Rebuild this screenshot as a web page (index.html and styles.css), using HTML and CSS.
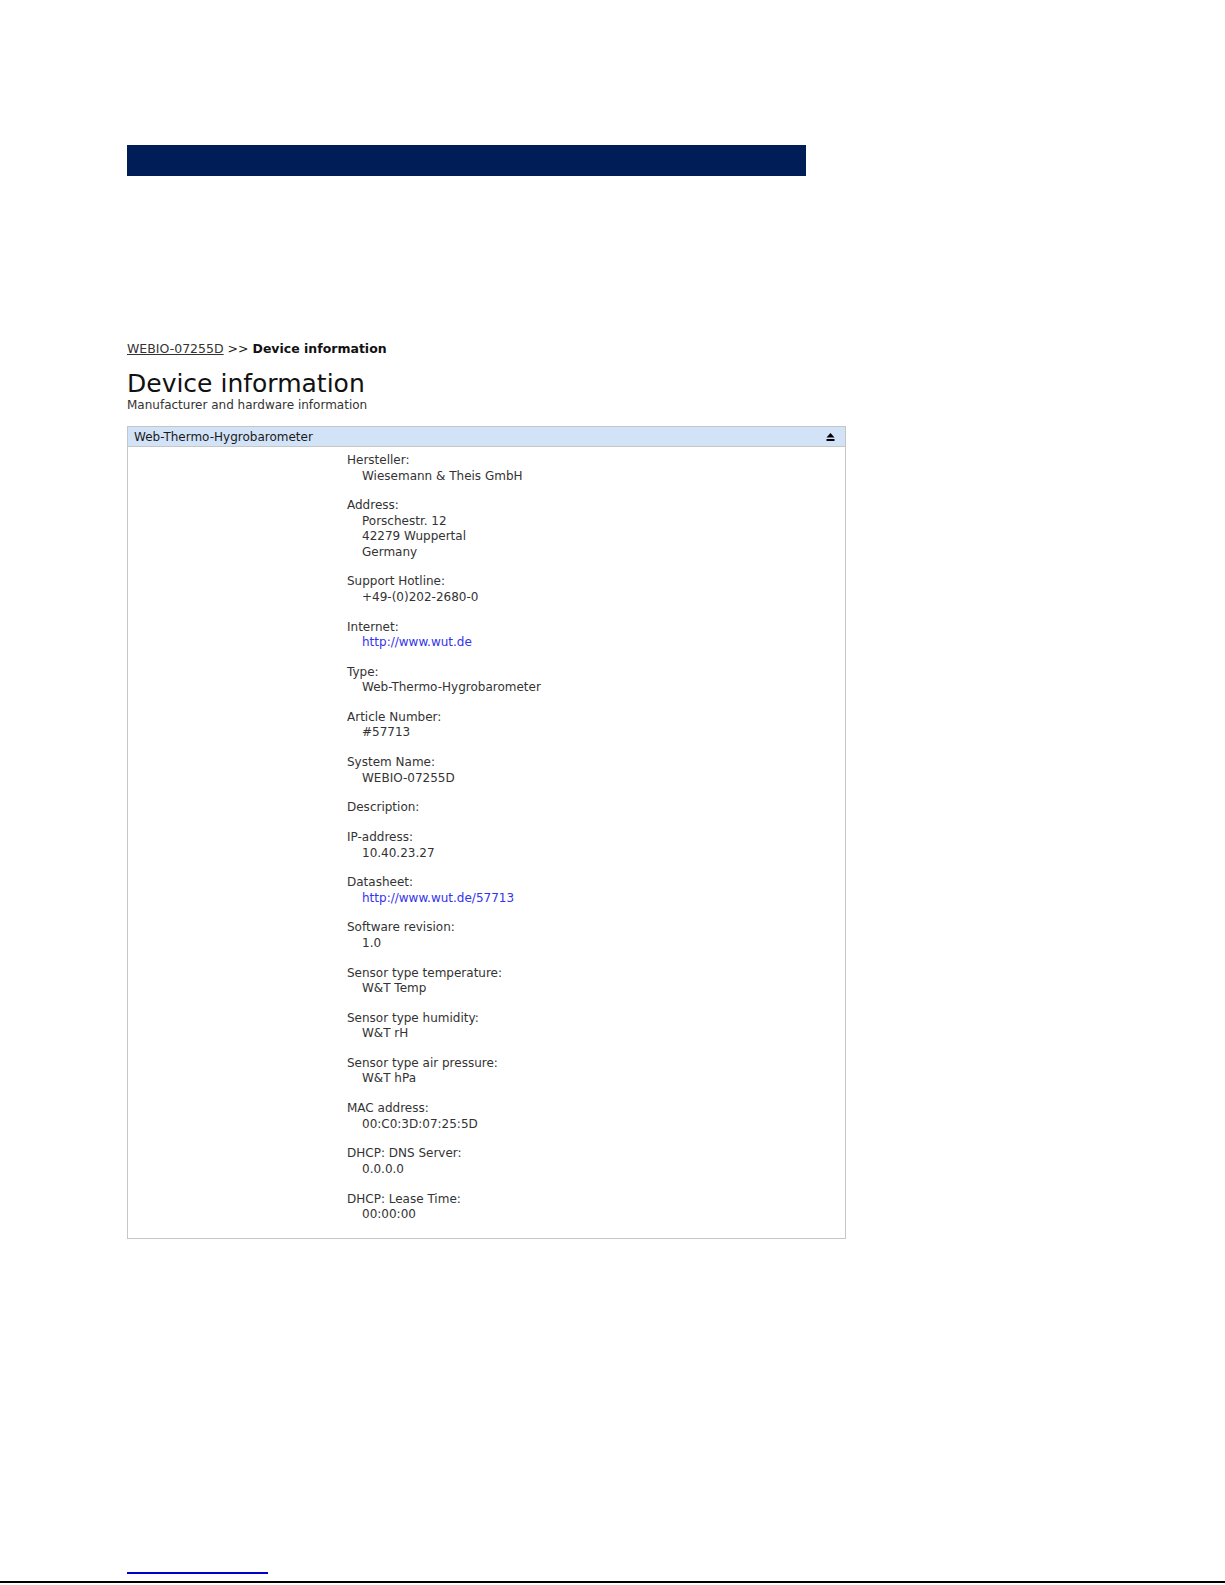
FILE: index.html
```html
<!DOCTYPE html>
<html lang="en">
<head>
  <meta charset="UTF-8">
  <meta name="viewport" content="width=device-width, initial-scale=1.0">
  <link rel="stylesheet" href="styles.css">
  <title>Device information</title>
</head>
<body>
  <div class="page">
    <div class="top-bar"></div>

    <div class="breadcrumb">
      <a href="#" class="crumb-link">WEBIO-07255D</a> &gt;&gt; <b>Device information</b>
    </div>

    <h1 class="title">Device information</h1>
    <p class="subtitle">Manufacturer and hardware information</p>

    <div class="panel">
      <div class="panel-head">
        <span>Web-Thermo-Hygrobarometer</span>
        <svg class="collapse-icon" width="9" height="8" viewBox="0 0 9 8">
          <path d="M4.5 0 L8.5 4.5 L0.5 4.5 Z" fill="#000"/>
          <rect x="0.5" y="6" width="8" height="2" fill="#000"/>
        </svg>
      </div>
      <div class="panel-body">
        <dl class="info">
          <dt>Hersteller:</dt>
          <dd>Wiesemann &amp; Theis GmbH</dd>

          <dt>Address:</dt>
          <dd>Porschestr. 12<br>42279 Wuppertal<br>Germany</dd>

          <dt>Support Hotline:</dt>
          <dd>+49-(0)202-2680-0</dd>

          <dt>Internet:</dt>
          <dd><a href="#">http://www.wut.de</a></dd>

          <dt>Type:</dt>
          <dd>Web-Thermo-Hygrobarometer</dd>

          <dt>Article Number:</dt>
          <dd>#57713</dd>

          <dt>System Name:</dt>
          <dd>WEBIO-07255D</dd>

          <dt>Description:</dt>
          <dd></dd>

          <dt>IP-address:</dt>
          <dd>10.40.23.27</dd>

          <dt>Datasheet:</dt>
          <dd><a href="#">http://www.wut.de/57713</a></dd>

          <dt>Software revision:</dt>
          <dd>1.0</dd>

          <dt>Sensor type temperature:</dt>
          <dd>W&amp;T Temp</dd>

          <dt>Sensor type humidity:</dt>
          <dd>W&amp;T rH</dd>

          <dt>Sensor type air pressure:</dt>
          <dd>W&amp;T hPa</dd>

          <dt>MAC address:</dt>
          <dd>00:C0:3D:07:25:5D</dd>

          <dt>DHCP: DNS Server:</dt>
          <dd>0.0.0.0</dd>

          <dt>DHCP: Lease Time:</dt>
          <dd>00:00:00</dd>
        </dl>
      </div>
    </div>

    <div class="footnote-line"></div>
  </div>
  <div class="page-edge"></div>
</body>
</html>
```

FILE: styles.css
```css
body {
  margin: 0;
  font-family: "DejaVu Sans", Verdana, sans-serif;
  font-size: 12px;
  color: #333;
  background-color: #ffffff;
}

.page {
  padding-left: 127px;
  padding-top: 145px;
}

.top-bar {
  width: 679px;
  height: 31px;
  background-color: #001d57;
}

.breadcrumb {
  margin-top: 165px;
  font-size: 12.5px;
  color: #222;
  line-height: 16px;
}

.crumb-link {
  color: #333;
  text-decoration: underline;
}

.breadcrumb b {
  color: #111;
}

.title {
  margin: 13px 0 0 0;
  font-size: 25px;
  font-weight: normal;
  color: #111;
  line-height: 28px;
}

.subtitle {
  margin: 0 0 14px 0;
  font-size: 12px;
  line-height: 14px;
}

.panel {
  width: 717px;
  border: 1px solid #c6c6c6;
}

.panel-head {
  display: flex;
  justify-content: space-between;
  align-items: center;
  height: 19px;
  padding: 0 10px 0 6px;
  background-color: #d2e3f8;
  border-bottom: 1px solid #c6c6c6;
  color: #1a1a1a;
}

.collapse-icon {
  display: block;
}

.panel-body {
  padding: 6px 0 15px 219px;
}

.info {
  margin: 0;
  line-height: 15.5px;
}

.info dt {
  margin-top: 14.2px;
}

.info dt:first-child {
  margin-top: 0;
}

.info dd {
  margin-left: 15px;
}

.info a {
  color: #3333ee;
  text-decoration: none;
}

.footnote-line {
  margin-top: 333px;
  width: 141px;
  height: 2px;
  background-color: #0000cc;
}

.page-edge {
  margin-top: 7px;
  height: 2px;
  background-color: #000;
}
```
